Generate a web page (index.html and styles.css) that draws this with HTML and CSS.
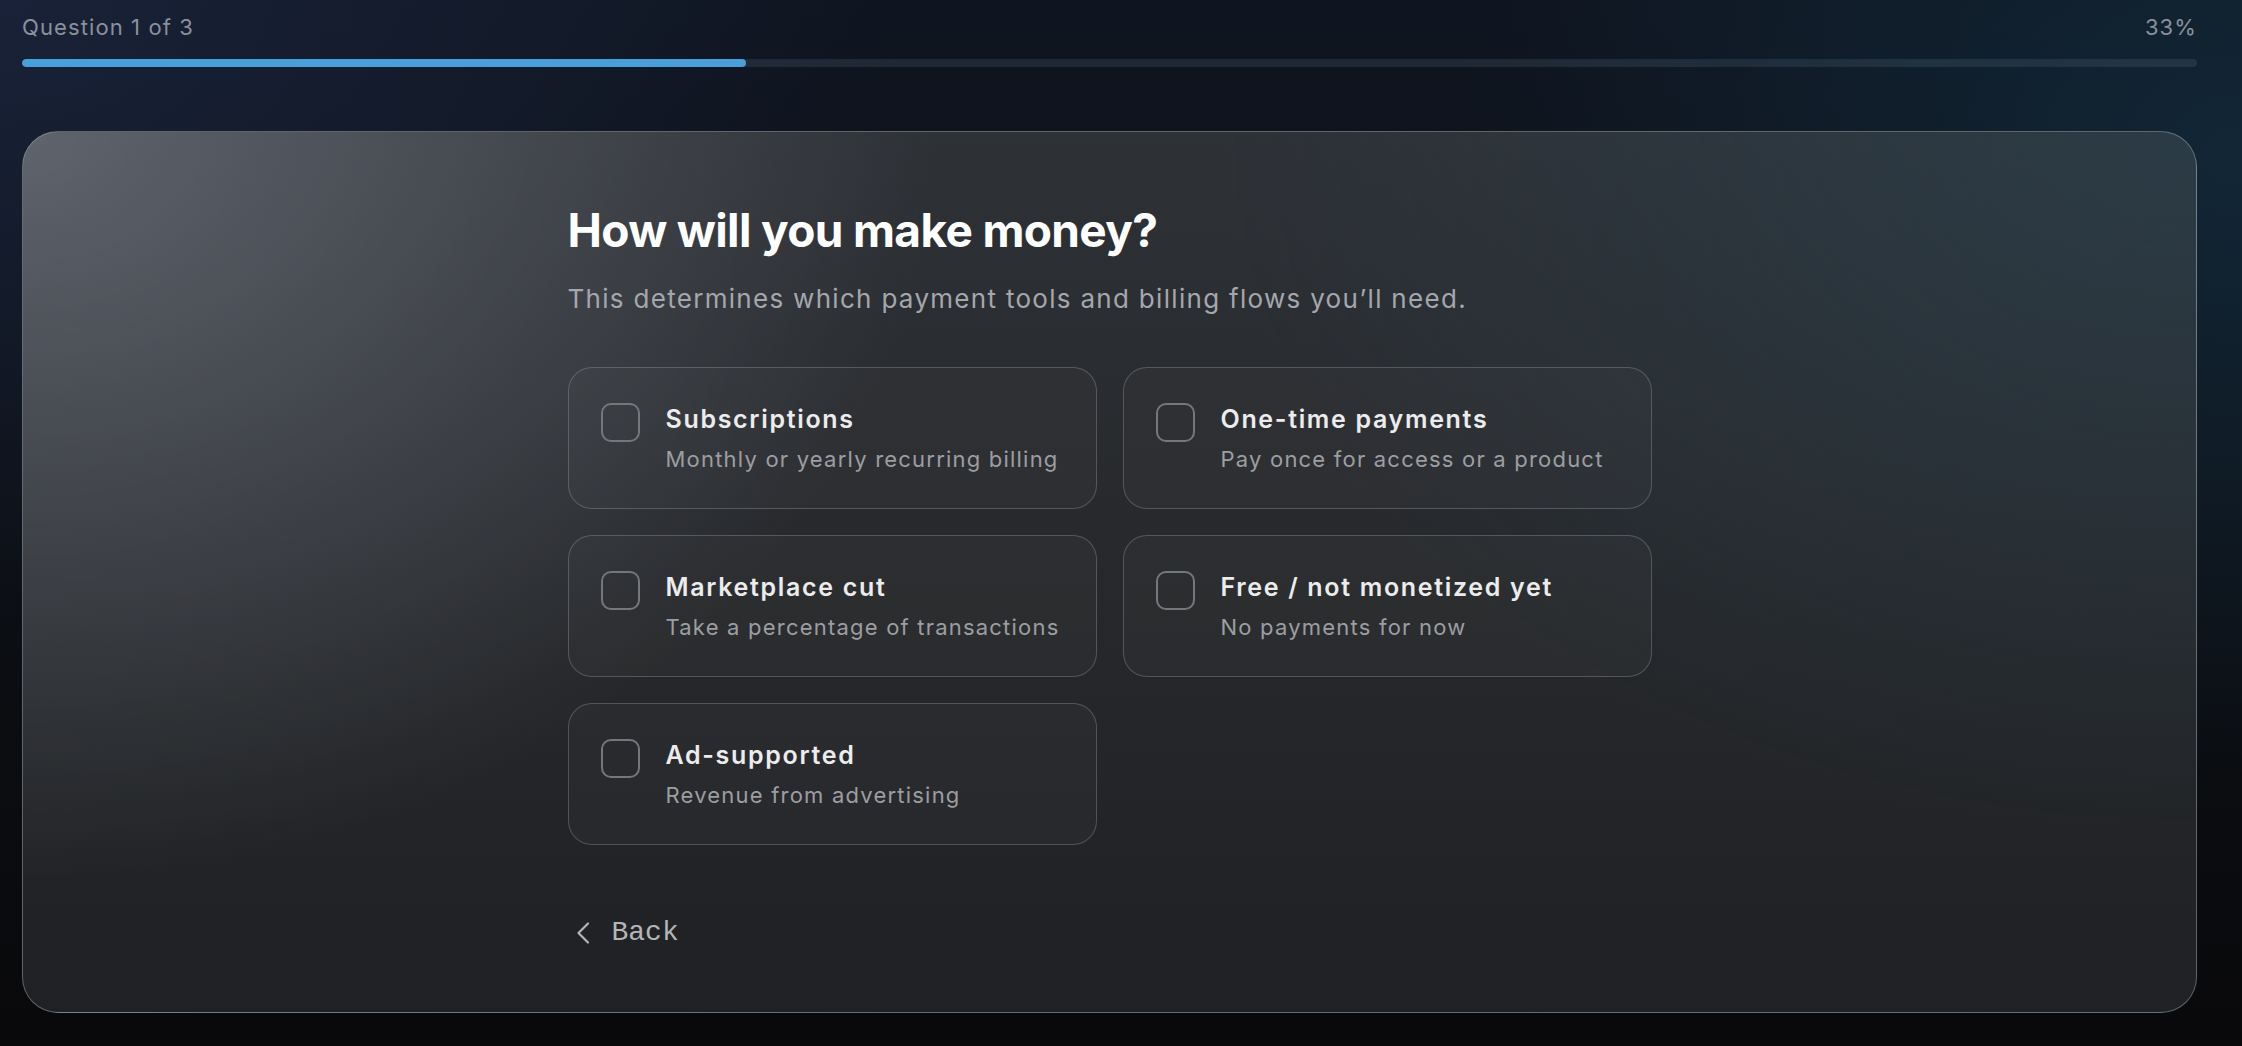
FILE: index.html
```html
<!DOCTYPE html>
<html lang="en">
<head>
<meta charset="utf-8">
<title>How will you make money?</title>
<link rel="stylesheet" href="styles.css">
</head>
<body>
<div class="page">
  <header class="progress-head">
    <div class="progress-labels">
      <span class="q-label">Question 1 of 3</span>
      <span class="q-pct">33%</span>
    </div>
    <div class="track"><div class="fill" style="width:33.3%"></div></div>
  </header>

  <main class="panel">
    <div class="content">
      <h1 class="title">How will you make money?</h1>
      <p class="subtitle">This determines which payment tools and billing flows you’ll need.</p>

      <div class="options">
        <div class="option">
          <span class="box"></span>
          <div class="opt-text">
            <div class="opt-title">Subscriptions</div>
            <div class="opt-desc">Monthly or yearly recurring billing</div>
          </div>
        </div>
        <div class="option">
          <span class="box"></span>
          <div class="opt-text">
            <div class="opt-title">One-time payments</div>
            <div class="opt-desc">Pay once for access or a product</div>
          </div>
        </div>
        <div class="option">
          <span class="box"></span>
          <div class="opt-text">
            <div class="opt-title">Marketplace cut</div>
            <div class="opt-desc">Take a percentage of transactions</div>
          </div>
        </div>
        <div class="option">
          <span class="box"></span>
          <div class="opt-text">
            <div class="opt-title">Free / not monetized yet</div>
            <div class="opt-desc">No payments for now</div>
          </div>
        </div>
        <div class="option">
          <span class="box"></span>
          <div class="opt-text">
            <div class="opt-title">Ad-supported</div>
            <div class="opt-desc">Revenue from advertising</div>
          </div>
        </div>
      </div>

      <button class="back" type="button">
        <svg class="chev" width="14" height="24" viewBox="0 0 14 24" aria-hidden="true"><path d="M12 2.5 L2.5 12 L12 21.5" fill="none" stroke="currentColor" stroke-width="2.2" stroke-linecap="round" stroke-linejoin="round"/></svg>
        <span>Back</span>
      </button>
    </div>
  </main>
</div>
</body>
</html>
```

FILE: styles.css
```css
* { box-sizing: border-box; }

html, body {
  margin: 0;
  height: 100%;
}

body {
  font-family: Inter, "Noto Sans", "Liberation Sans", sans-serif;
  color: #e9e9ea;
  background:
    radial-gradient(ellipse 40% 60% at 0% 0%, rgba(26, 36, 60, 0.85), rgba(26, 36, 60, 0) 100%),
    radial-gradient(ellipse 35% 60% at 100% 15%, rgba(18, 40, 56, 0.9), rgba(18, 40, 56, 0) 100%),
    linear-gradient(180deg, #0f1520 0%, #0b0d11 70%, #09090b 100%);
  overflow: hidden;
}

.page {
  height: 100vh;
  display: flex;
  flex-direction: column;
  padding: 12px 45px 33px 22px;
}

.progress-labels {
  display: flex;
  justify-content: space-between;
  font-size: 22px;
  line-height: 30px;
  letter-spacing: 0.05em;
  color: #8b919c;
}

.track {
  margin-top: 17px;
  height: 8px;
  border-radius: 4px;
  background: rgba(120, 150, 175, 0.16);
  overflow: hidden;
}

.fill {
  height: 100%;
  border-radius: 4px;
  background: #489fd9;
}

.panel {
  flex: 1;
  margin-top: 64px;
  border: 1.5px solid rgba(150, 156, 165, 0.55);
  border-radius: 36px;
  display: flex;
  align-items: center;
  justify-content: center;
  background:
    radial-gradient(ellipse 42% 85% at 0% 0%, rgba(135, 141, 154, 0.55), rgba(135, 141, 154, 0) 100%),
    radial-gradient(ellipse 45% 80% at 100% 0%, rgba(42, 66, 80, 0.6), rgba(42, 66, 80, 0) 100%),
    linear-gradient(180deg, #2e3136 0%, #25272a 60%, #1f2124 100%);
}

.content {
  width: 1084px;
  padding-top: 10px;
}

.title {
  margin: 0;
  font-size: 46px;
  line-height: 1.2;
  font-weight: 700;
  color: #ffffff;
  letter-spacing: -0.65px;
}

.subtitle {
  margin: 20px 0 0;
  font-size: 26px;
  line-height: 39px;
  letter-spacing: 0.05em;
  color: #a4a7ad;
}

.options {
  margin-top: 49px;
  display: grid;
  grid-template-columns: 1fr 1fr;
  gap: 26px;
}

.option {
  display: flex;
  align-items: flex-start;
  gap: 25px;
  height: 142px;
  padding: 34px 24px 0 32px;
  border: 1.5px solid rgba(160, 164, 172, 0.35);
  border-radius: 24px;
  background: rgba(255, 255, 255, 0.025);
}

.box {
  flex: none;
  width: 39px;
  height: 39px;
  margin-top: 1.5px;
  border: 2px solid #74777c;
  border-radius: 10px;
}

.opt-text {
  padding-left: 1px;
}

.opt-title {
  font-size: 25px;
  line-height: 35px;
  font-weight: 600;
  letter-spacing: 0.067em;
  color: #ececed;
  white-space: nowrap;
}

.opt-desc {
  margin-top: 6px;
  font-size: 22px;
  line-height: 33px;
  letter-spacing: 0.055em;
  color: #9c9ea2;
  white-space: nowrap;
}

.back {
  margin-top: 70px;
  display: flex;
  align-items: center;
  gap: 22px;
  padding: 0 0 0 8px;
  border: 0;
  background: none;
  color: #b4b5b7;
  font-family: "Liberation Mono", "DejaVu Sans Mono", monospace;
  font-size: 28px;
  line-height: 36px;
  cursor: pointer;
}

.chev {
  display: block;
}
```
